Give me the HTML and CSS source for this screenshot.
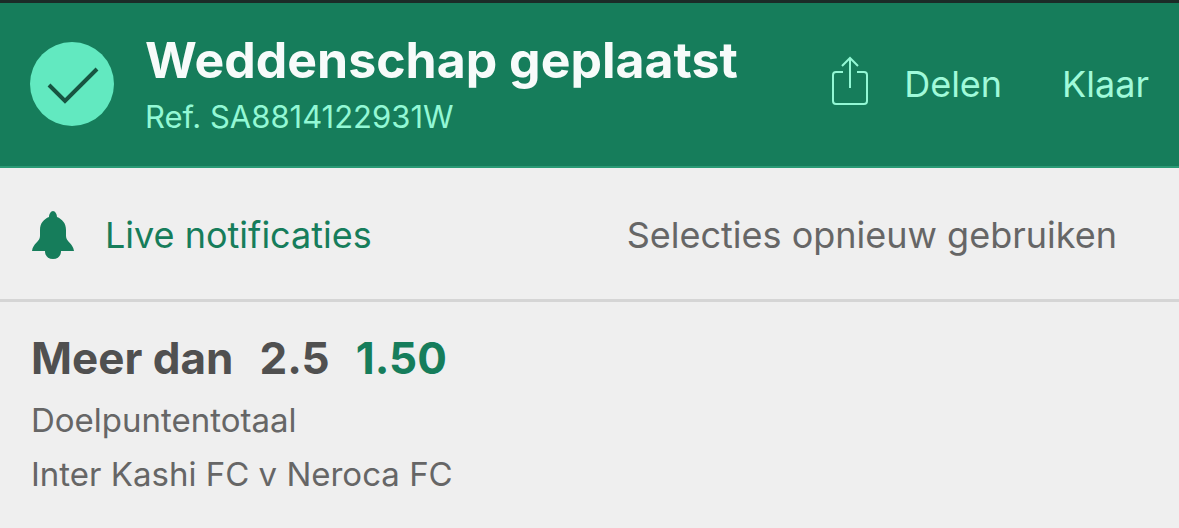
FILE: index.html
```html
<!DOCTYPE html>
<html lang="nl">
<head>
  <meta charset="UTF-8" />
  <meta name="viewport" content="width=device-width, initial-scale=1.0"/>
  <title>Weddenschap geplaatst</title>
  <link rel="stylesheet" href="styles.css">
</head>
<body>
  <header class="receipt-header">
    <svg class="check-icon" viewBox="0 0 84 84" aria-hidden="true">
      <circle cx="42" cy="42" r="42" fill="#62e9c0"/>
      <path d="M19 43 L35 59 L67 27" fill="none" stroke="#175441" stroke-width="4"/>
    </svg>
    <div class="receipt-title">
      <h1>Weddenschap geplaatst</h1>
      <p class="reference">Ref. SA8814122931W</p>
    </div>
    <button type="button" class="header-button">
      <svg class="share-icon" viewBox="0 0 36 50" aria-hidden="true">
        <path d="M11 16 H4 Q1 16 1 19 V45 Q1 48 4 48 H32 Q35 48 35 45 V19 Q35 16 32 16 H25 M18 32 V2 M10 10 L18 2 L26 10" fill="none" stroke="#93f8d5" stroke-width="2"/>
      </svg>
      Delen
    </button>
    <button type="button" class="header-button">Klaar</button>
  </header>

  <div class="actions">
    <button type="button" class="action-button live">
      <svg class="bell-icon" viewBox="0 0 42 48" aria-hidden="true">
        <path d="M21 0 C19 0 17 3 17 6 C12 8 8 12 8 19 V25 C8 31 1 32 0 40 H13 C13 45 16 48 21 48 C26 48 29 45 29 40 H42 C41 32 34 31 34 25 V19 C34 12 30 8 25 6 C25 3 23 0 21 0 Z" fill="#167d5b"/>
      </svg>
      Live notificaties
    </button>
    <button type="button" class="action-button">Selecties opnieuw gebruiken</button>
  </div>

  <main class="selection">
    <h2><span>Meer dan</span> <span>2.5</span> <span class="odds">1.50</span></h2>
    <p>Doelpuntentotaal</p>
    <p>Inter Kashi FC v Neroca FC</p>
  </main>
</body>
</html>
```
FILE: styles.css
```css
* { box-sizing: border-box; }
body { margin: 0; background: #efefef; color: #666; font-family: Inter, "Liberation Sans", sans-serif; }
h1, h2, p { margin: 0; }
button {
  padding: 0; border: none; background: none;
  font-family: inherit; cursor: pointer;
}
.receipt-header {
  display: flex; align-items: center; padding: 19px 30px 20px;
  background: #167d5b; border-top: 3px solid #1b2b27; border-bottom: 2px solid #2a9a75;
}
.check-icon { width: 84px; height: 84px; margin-right: 31px; }
.receipt-title { flex: 1; padding-top: 8px; padding-bottom: 2px; }
h1 { font-size: 50px; line-height: 60px; color: #f7fbfa; white-space: nowrap; }
.reference { font-size: 31px; line-height: 54px; color: #93f8d5; }
.header-button {
  display: flex; align-items: center; margin-left: 60px;
  font-size: 36px; line-height: 50px; color: #a0fada;
}
.share-icon { width: 36px; height: 50px; margin: 0 36px 6px 0; }
.actions {
  display: flex; align-items: center; justify-content: space-between;
  padding: 42px 62px 39px 32px; border-bottom: 3px solid #d5d5d5;
}
.action-button { display: flex; align-items: center; font-size: 36px; line-height: 50px; color: #666; }
.live { color: #167d5b; }
.bell-icon { width: 42px; height: 48px; margin-right: 31px; }
.selection { padding: 26px 31px; }
h2 { display: flex; gap: 26px; margin-bottom: 5px; font-size: 44px; line-height: 60px; color: #505050; }
.odds { color: #167d5b; }
.selection p { font-size: 33px; line-height: 54px; }
```
